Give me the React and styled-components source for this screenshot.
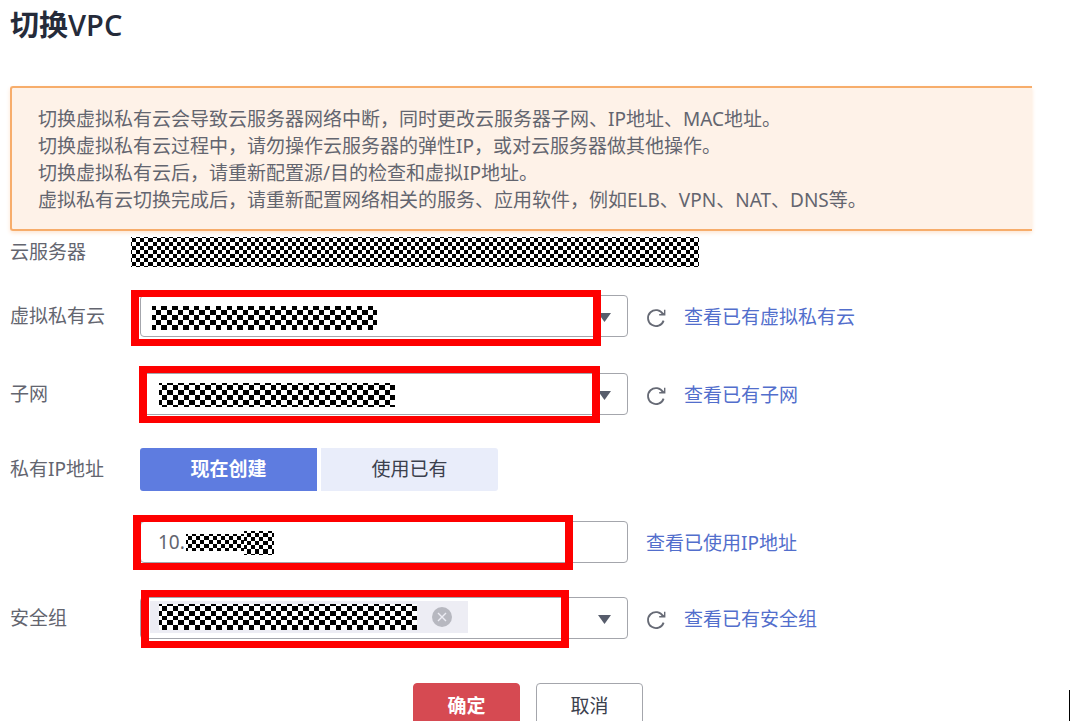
import { useState } from 'react';
import styled, { createGlobalStyle } from 'styled-components';

const GlobalStyle = createGlobalStyle`
  * {
    box-sizing: border-box;
  }
  body {
    margin: 0;
    background: #fff;
    color: #63656f;
    font-family: 'Noto Sans', 'Noto Sans CJK SC', sans-serif;
    font-size: 19px;
    line-height: 27px;
  }
  button,
  input,
  select {
    font: inherit;
    color: inherit;
  }
`;

const Page = styled.main`
  position: relative;
  height: 100vh;
  overflow: hidden;
  padding: 5px 38px 0 10px;
`;

const Title = styled.h1`
  margin: 0;
  font-size: 29px;
  line-height: 40px;
  font-weight: 700;
  color: #252b3a;
  span {
    font-family: 'Open Sans', sans-serif;
    font-weight: 600;
  }
`;

const Alert = styled.div`
  margin-top: 41px;
  padding: 18px 27px 15px 26px;
  background: #fef2e8;
  border: 2px solid #f7ad6b;
  border-right: 0;
  border-radius: 3px 0 0 3px;
  box-shadow: 0 2px 4px #fde6d3;
  p {
    margin: 0;
  }
`;

const Form = styled.form`
  display: flex;
  flex-direction: column;
`;

const Row = styled.div`
  display: grid;
  grid-template-columns: 130px minmax(0, 488px) auto;
  align-items: center;
  justify-content: start;
  margin-top: ${({ $gap }) => $gap}px;
`;

const Label = styled.label`
  white-space: nowrap;
`;

const ServerName = styled.div`
  grid-column: 2 / -1;
  margin-left: -9px;
`;

const Side = styled.div`
  display: flex;
  align-items: center;
  gap: 18px;
  margin-left: 18px;
  padding-top: 3px;
  white-space: nowrap;
`;

const Link = styled.a`
  color: #526ecc;
  text-decoration: none;
`;

const IconButton = styled.button`
  display: flex;
  padding: 0;
  border: 0;
  background: none;
  color: #666a75;
  cursor: pointer;
`;

const Control = styled.div`
  position: relative;
  height: 42px;
`;

const Field = styled.input`
  display: block;
  width: 100%;
  height: 100%;
  padding: 0 17px;
  border: 1px solid #a4a6ac;
  border-radius: 4px;
  background: #fff;
  outline: none;
  appearance: none;
`;

const Caret = styled.svg`
  position: absolute;
  top: 18px;
  right: 17px;
  fill: #575d6c;
  pointer-events: none;
`;

const Cover = styled.div`
  position: absolute;
  top: ${({ $top }) => $top}px;
  left: ${({ $left }) => $left}px;
  pointer-events: none;
`;

const Highlight = styled.div`
  position: absolute;
  inset: ${({ $inset }) => $inset};
  border: solid #fe0000;
  border-width: 7px 8px;
  pointer-events: none;
`;

const Tag = styled.div`
  position: absolute;
  top: 4px;
  left: 10px;
  display: flex;
  align-items: center;
  gap: 15px;
  height: 32px;
  padding: 0 16px 0 9px;
  background: #ededf4;
`;

const Segments = styled.div`
  display: flex;
  gap: 4px;
`;

const Segment = styled.button`
  width: 177px;
  height: 43px;
  padding: 0;
  border: 0;
  border-radius: ${({ $active }) => ($active ? '3px 0 0 3px' : '0 3px 3px 0')};
  background: ${({ $active }) => ($active ? '#5e7ce0' : '#e9edfa')};
  color: ${({ $active }) => ($active ? '#fff' : '#3b404d')};
  font-weight: ${({ $active }) => ($active ? 700 : 400)};
  cursor: pointer;
`;

const Footer = styled.div`
  display: flex;
  gap: 16px;
  margin-top: 44px;
  padding-left: 403px;
`;

const Button = styled.button`
  flex: none;
  width: 107px;
  height: 46px;
  border: 1px solid ${({ $primary }) => ($primary ? '#d64a52' : '#a4a6ac')};
  border-radius: 4px;
  background: ${({ $primary }) => ($primary ? '#d64a52' : '#fff')};
  color: ${({ $primary }) => ($primary ? '#fff' : '#3b404d')};
  font-weight: ${({ $primary }) => ($primary ? 700 : 400)};
  cursor: pointer;
`;

const TextCursor = styled.div`
  position: absolute;
  right: 0;
  bottom: 0;
  width: 1px;
  height: 31px;
  background: #000;
`;

// checkerboard that hides private values; startX / startY is the size of the cut first cell
function Mosaic({ width, height, cellX, cellY, startX, startY }) {
  let d = '';
  const rows = Math.ceil((height - startY) / cellY) + 1;
  const cols = Math.ceil((width - startX) / cellX) + 1;
  for (let r = 0; r < rows; r += 1) {
    for (let c = r % 2; c < cols; c += 2) {
      const x = startX + (c - 1) * cellX;
      const y = startY + (r - 1) * cellY;
      d += `M${x} ${y}h${cellX}v${cellY}h${-cellX}z`;
    }
  }
  return (
    <svg
      width={width}
      height={height}
      viewBox={`0 0 ${width} ${height}`}
      display="block"
      aria-hidden="true"
    >
      <rect width={width} height={height} fill="#fff" />
      <path d={d} fill="#000" shapeRendering="crispEdges" />
    </svg>
  );
}

function Refresh() {
  return (
    <IconButton type="button" aria-label="刷新">
      <svg width="20" height="20" viewBox="0 0 20 20" fill="none">
        <path
          d="M17 6.2A8 8 0 1 0 17.6 12.6"
          stroke="currentColor"
          strokeWidth="1.8"
        />
        <path d="M19.4 1.8V7.4H13.2V6H16.4L18 4.4V1.8z" fill="currentColor" />
      </svg>
    </IconButton>
  );
}

function SelectField({ id, children }) {
  return (
    <Control>
      <Field as="select" id={id}>
        <option value="" aria-label="已选" />
      </Field>
      <Caret width="13" height="9" viewBox="0 0 13 9">
        <path d="M0 0h13L6.5 9z" />
      </Caret>
      {children}
    </Control>
  );
}

export default function App() {
  const [mode, setMode] = useState('new');
  const [ip, setIp] = useState('10.');

  return (
    <>
      <GlobalStyle />
      <Page>
        <Title>
          切换<span>VPC</span>
        </Title>
        <Alert>
          <p>切换虚拟私有云会导致云服务器网络中断，同时更改云服务器子网、IP地址、MAC地址。</p>
          <p>切换虚拟私有云过程中，请勿操作云服务器的弹性IP，或对云服务器做其他操作。</p>
          <p>切换虚拟私有云后，请重新配置源/目的检查和虚拟IP地址。</p>
          <p>虚拟私有云切换完成后，请重新配置网络相关的服务、应用软件，例如ELB、VPN、NAT、DNS等。</p>
        </Alert>

        <Form onSubmit={(e) => e.preventDefault()}>
          <Row $gap={6}>
            <Label as="span">云服务器</Label>
            <ServerName>
              <Mosaic width={568} height={30} cellX={4.1} cellY={3.95} startX={1} startY={1} />
            </ServerName>
          </Row>

          <Row $gap={28}>
            <Label htmlFor="vpc">虚拟私有云</Label>
            <SelectField id="vpc">
              <Cover $top={11} $left={12}>
                <Mosaic width={225} height={24} cellX={5.43} cellY={5} startX={4} startY={4} />
              </Cover>
              <Highlight $inset="-5px 27px -9px -9px" />
            </SelectField>
            <Side>
              <Refresh />
              <Link href="#vpc">查看已有虚拟私有云</Link>
            </Side>
          </Row>

          <Row $gap={36}>
            <Label htmlFor="subnet">子网</Label>
            <SelectField id="subnet">
              <Cover $top={10} $left={19}>
                <Mosaic width={236} height={24} cellX={5.43} cellY={5} startX={3} startY={2} />
              </Cover>
              <Highlight $inset="-7px 28px -8px -1px" />
            </SelectField>
            <Side>
              <Refresh />
              <Link href="#subnet">查看已有子网</Link>
            </Side>
          </Row>

          <Row $gap={33}>
            <Label as="span">私有IP地址</Label>
            <Segments>
              <Segment type="button" $active={mode === 'new'} onClick={() => setMode('new')}>
                现在创建
              </Segment>
              <Segment type="button" $active={mode === 'used'} onClick={() => setMode('used')}>
                使用已有
              </Segment>
            </Segments>
          </Row>

          <Row $gap={30}>
            <span />
            <Control>
              <Field
                type="text"
                aria-label="私有IP地址"
                value={ip}
                onChange={(e) => setIp(e.target.value)}
              />
              <Cover $top={13} $left={46}>
                <Mosaic width={64} height={17} cellX={4.1} cellY={4.1} startX={2} startY={2} />
              </Cover>
              <Cover $top={10} $left={104}>
                <Mosaic width={30} height={24} cellX={4.1} cellY={4.1} startX={3} startY={2} />
              </Cover>
              <Highlight $inset="-6px 55px -7px -7px" />
            </Control>
            <Side>
              <Link href="#ip">查看已使用IP地址</Link>
            </Side>
          </Row>

          <Row $gap={34}>
            <Label htmlFor="group">安全组</Label>
            <SelectField id="group">
              <Tag>
                <Mosaic width={258} height={26} cellX={5.43} cellY={4.8} startX={3} startY={2} />
                <IconButton type="button" aria-label="移除">
                  <svg width="20" height="20" viewBox="0 0 20 20">
                    <circle cx="10" cy="10" r="10" fill="#b7b8c0" />
                    <path d="M6 6l8 8M14 6l-8 8" stroke="#ededf4" strokeWidth="1.4" />
                  </svg>
                </IconButton>
              </Tag>
              <Highlight $inset="-7px 59px -9px 1px" />
            </SelectField>
            <Side>
              <Refresh />
              <Link href="#group">查看已有安全组</Link>
            </Side>
          </Row>

          <Footer>
            <Button type="submit" $primary>
              确定
            </Button>
            <Button type="button">取消</Button>
          </Footer>
        </Form>
        <TextCursor />
      </Page>
    </>
  );
}
